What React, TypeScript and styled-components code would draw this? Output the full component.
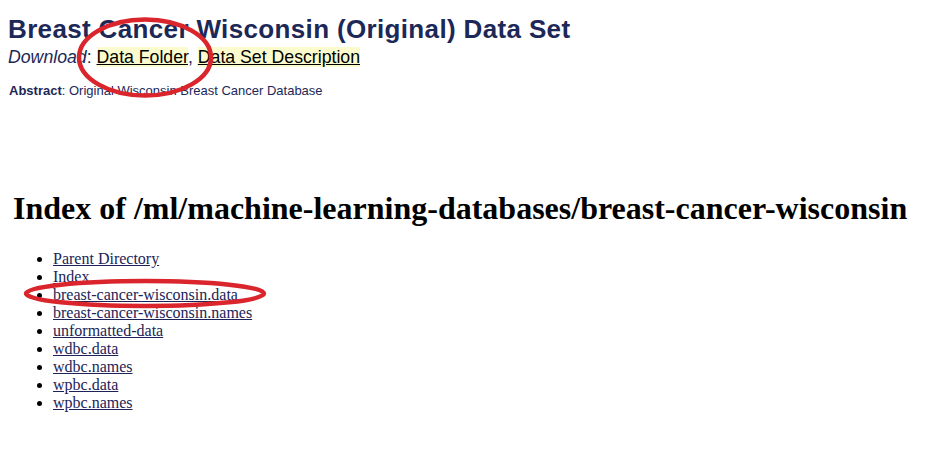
import React from "react";
import styled, { createGlobalStyle } from "styled-components";

const Global = createGlobalStyle`
  html, body { margin: 0; padding: 0; background: #ffffff; }
  body { width: 940px; height: 449px; overflow: hidden; }
`;

const Page = styled.div`
  position: relative;
  width: 940px;
  height: 449px;
  display: flex;
  flex-direction: column;
`;

const Header = styled.section`
  display: flex;
  flex-direction: column;
  padding: 15px 0 0 8px;
  font-family: "Liberation Sans", Arial, sans-serif;
  color: #1c2857;
`;

const Title = styled.h1`
  margin: 0;
  font-size: 26px;
  line-height: 29px;
  letter-spacing: 0.35px;
  font-weight: bold;
  color: #1c2857;
`;

const DownloadLine = styled.div`
  margin-top: 3px;
  font-size: 17.7px;
  line-height: 20px;
  color: #1c2857;
`;

const Label = styled.em`
  font-style: italic;
`;

const HiLink = styled.a`
  color: #000000;
  background: #fbfbcd;
  text-decoration: underline;
`;

const Abstract = styled.p`
  margin: 16px 0 0 1px;
  font-size: 13px;
  line-height: 15px;
  color: #1c2857;
`;

const Listing = styled.section`
  display: flex;
  flex-direction: column;
  padding: 92px 0 0 13px;
  font-family: "Liberation Serif", "Times New Roman", serif;
`;

const IndexTitle = styled.h1`
  margin: 0;
  font-size: 32px;
  line-height: 37px;
  font-weight: bold;
  color: #000000;
`;

const Files = styled.ul`
  margin: 23px 0 0 0;
  padding-left: 40px;
  list-style: disc;
  font-size: 16px;
  line-height: 18px;
  color: #000000;
`;

const FileLink = styled.a`
  color: #1c2457;
  text-decoration: underline;
`;

const Annotations = styled.svg`
  position: absolute;
  left: 0;
  top: 0;
  pointer-events: none;
`;

const files = [
  "Parent Directory",
  "Index",
  "breast-cancer-wisconsin.data",
  "breast-cancer-wisconsin.names",
  "unformatted-data",
  "wdbc.data",
  "wdbc.names",
  "wpbc.data",
  "wpbc.names",
];

export default function App() {
  return (
    <Page>
      <Global />
      <Header>
        <Title>Breast Cancer Wisconsin (Original) Data Set</Title>
        <DownloadLine>
          <Label>Download</Label>: <HiLink href="#">Data Folder</HiLink>,{" "}
          <HiLink href="#">Data Set Description</HiLink>
        </DownloadLine>
        <Abstract>
          <b>Abstract</b>: Original Wisconsin Breast Cancer Database
        </Abstract>
      </Header>
      <Listing>
        <IndexTitle>Index of /ml/machine-learning-databases/breast-cancer-wisconsin</IndexTitle>
        <Files>
          {files.map((f) => (
            <li key={f}>
              <FileLink href="#">{f}</FileLink>
            </li>
          ))}
        </Files>
      </Listing>
      <Annotations width="940" height="449" viewBox="0 0 940 449">
        <ellipse cx="145" cy="57.5" rx="66" ry="38" fill="none" stroke="#d9252b" strokeWidth="4.5" />
        <ellipse cx="145" cy="293.5" rx="119" ry="12.5" fill="none" stroke="#d9252b" strokeWidth="4.5" />
      </Annotations>
    </Page>
  );
}
